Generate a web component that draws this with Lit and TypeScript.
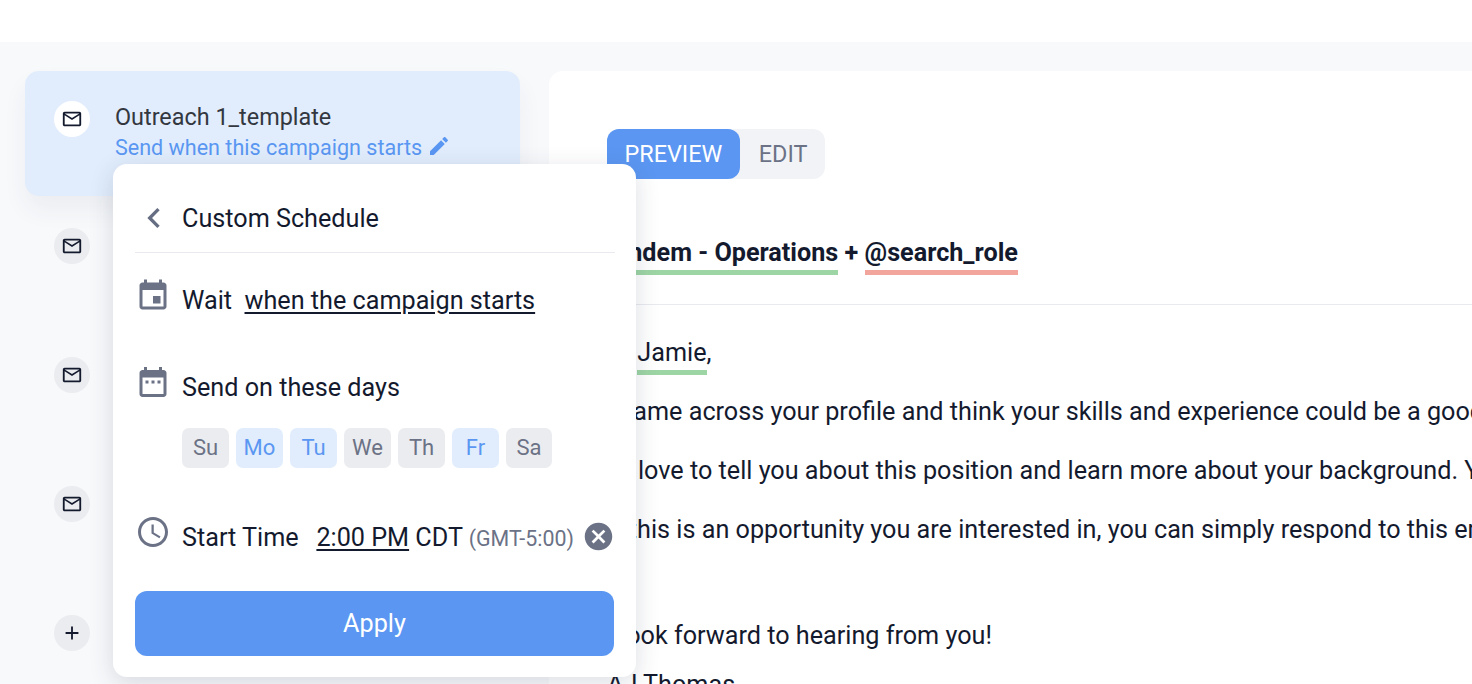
import { LitElement, html, css, svg } from "lit";
import { customElement } from "lit/decorators.js";

const ICONS = {
  mail: "M20 4H4c-1.1 0-1.99.9-1.99 2L2 18c0 1.1.9 2 2 2h16c1.1 0 2-.9 2-2V6c0-1.1-.9-2-2-2zm0 14H4V8l8 5 8-5v10zm-8-7L4 6h16l-8 5z",
  add: "M19 13h-6v6h-2v-6H5v-2h6V5h2v6h6v2z",
  edit: "M3 17.25V21h3.75L17.81 9.94l-3.75-3.75L3 17.25zM20.71 7.04c.39-.39.39-1.02 0-1.41l-2.34-2.34c-.39-.39-1.02-.39-1.41 0l-1.83 1.83 3.75 3.75 1.83-1.83z",
  back: "M15.41 7.41L14 6l-6 6 6 6 1.41-1.41L10.83 12z",
  event: "M17 12h-5v5h5v-5zM16 1v2H8V1H6v2H5c-1.11 0-1.99.9-1.99 2L3 19c0 1.1.89 2 2 2h14c1.1 0 2-.9 2-2V5c0-1.1-.9-2-2-2h-1V1h-2zm3 18H5V8h14v11z",
  range: "M9 11H7v2h2v-2zm4 0h-2v2h2v-2zm4 0h-2v2h2v-2zm2-7h-1V2h-2v2H8V2H6v2H5c-1.11 0-1.99.9-1.99 2L3 20c0 1.1.89 2 2 2h14c1.1 0 2-.9 2-2V6c0-1.1-.9-2-2-2zm0 16H5V9h14v11z",
  clock: "M11.99 2C6.47 2 2 6.48 2 12s4.47 10 9.99 10C17.52 22 22 17.52 22 12S17.52 2 11.99 2zM12 20c-4.42 0-8-3.58-8-8s3.58-8 8-8 8 3.58 8 8-3.58 8-8 8zm.5-13H11v6l5.25 3.15.75-1.23-4.5-2.67z",
  cancel: "M12 2C6.47 2 2 6.47 2 12s4.47 10 10 10 10-4.47 10-10S17.53 2 12 2zm5 13.59L15.59 17 12 13.41 8.41 17 7 15.59 10.59 12 7 8.41 8.41 7 12 10.59 15.59 7 17 8.41 13.41 12 17 15.59z",
};

const icon = (name: keyof typeof ICONS, cls: string) => html`<svg class=${cls} viewBox="0 0 24 24" fill="currentColor">${svg`<path d=${ICONS[name]}></path>`}</svg>`;

const DAYS = [
  { label: "Su", on: false },
  { label: "Mo", on: true },
  { label: "Tu", on: true },
  { label: "We", on: false },
  { label: "Th", on: false },
  { label: "Fr", on: true },
  { label: "Sa", on: false },
];

@customElement("app-root")
export class AppRoot extends LitElement {
  static styles = css`
    :host {
      display: block;
      position: relative;
      height: 684px;
      overflow: hidden;
      background: #fff;
      font-family: Roboto, "Liberation Sans", sans-serif;
      color: #141a2e;
    }
    .page {
      position: absolute;
      inset: 42px 0 0 0;
      display: flex;
      align-items: flex-start;
      gap: 29px;
      padding: 29px 0 0 25px;
      background: #f8f9fb;
    }
    .sidebar {
      width: 495px;
      flex: none;
      display: flex;
      flex-direction: column;
    }
    .step {
      height: 129px;
      box-sizing: border-box;
      padding: 30px 0 0 29px;
      display: flex;
      gap: 25px;
    }
    .step.active {
      height: 125px;
      margin-bottom: 2px;
      background: #e1edfc;
      border-radius: 14px;
      box-shadow: 0 14px 24px rgba(40, 50, 80, 0.06);
    }
    .circle {
      width: 36px;
      height: 36px;
      border-radius: 50%;
      background: #ebecef;
      display: flex;
      align-items: center;
      justify-content: center;
      flex: none;
    }
    .active .circle {
      background: #fff;
    }
    .i22 {
      width: 22px;
      height: 22px;
    }
    .step-text {
      padding-top: 1px;
    }
    .step-title {
      font-size: 23.4px;
      line-height: 31px;
      color: #333740;
    }
    .step-sub {
      display: flex;
      align-items: center;
      gap: 5px;
      font-size: 21.55px;
      line-height: 30px;
      color: #5a97f2;
    }
    .i-edit {
      width: 24px;
      height: 24px;
      margin-top: -5px;
    }
    .main {
      flex: 1;
      height: 700px;
      box-sizing: border-box;
      background: #fff;
      border-radius: 14px 0 0 0;
      padding: 58px 0 0 58px;
      overflow: hidden;
      white-space: nowrap;
    }
    .tabs {
      display: inline-flex;
      background: #f2f3f7;
      border-radius: 12px;
      height: 50px;
      font-size: 23.4px;
      color: #6b7286;
    }
    .tab {
      padding: 0 18px 0 19px;
      line-height: 50px;
      border-radius: 12px;
    }
    .tab.on {
      padding: 0 17.5px;
      background: #5b97f2;
      color: #fff;
    }
    .subject {
      margin: 53px 0 0 -58px;
      padding: 0 0 32px 52px;
      border-bottom: 1px solid #e9eaf0;
      font-size: 25.2px;
      font-weight: 700;
      line-height: 42px;
      height: 40px;
    }
    .mark {
      display: inline-block;
      line-height: 36px;
      height: 35px;
      border-bottom: 5px solid;
    }
    .green {
      border-color: #9ed5a5;
    }
    .red {
      border-color: #f2a59d;
    }
    .body {
      font-size: 25.2px;
      padding-top: 30px;
    }
    .body p {
      margin: 0 0 24px;
      height: 35px;
      line-height: 35px;
    }
    .body p.blank {
      height: 23px;
    }
    .body p.tight {
      margin-bottom: 14px;
    }
    .body .mark {
      line-height: 35px;
      height: 35px;
    }
    .popup {
      position: absolute;
      left: 113px;
      top: 164px;
      width: 523px;
      height: 513px;
      box-sizing: border-box;
      padding: 0 22px;
      background: #fff;
      border-radius: 14px;
      box-shadow: 0 6px 24px rgba(40, 50, 80, 0.16);
      font-size: 25.2px;
      white-space: nowrap;
    }
    .head {
      height: 68px;
      padding-top: 20px;
      display: flex;
      align-items: center;
      gap: 8px;
      border-bottom: 1px solid #e9eaf0;
      margin-right: -1px;
    }
    .i-back {
      width: 40px;
      height: 40px;
      color: #656d82;
      margin-left: -1px;
    }
    .row {
      display: flex;
      align-items: flex-start;
      gap: 11px;
      line-height: 38px;
    }
    .i36 {
      width: 36px;
      height: 36px;
      flex: none;
      color: #6b7286;
    }
    .wait .i36 {
      margin-top: -4px;
    }
    .send .i36,
    .time .i36 {
      margin-top: -5px;
    }
    .link {
      text-decoration: underline;
      text-underline-offset: 3px;
    }
    .time .link {
      margin-left: -1px;
    }
    .wait {
      margin-top: 29px;
    }
    .send {
      margin-top: 49px;
    }
    .days {
      display: flex;
      gap: 7px;
      margin: 21px 0 0 47px;
    }
    .day {
      width: 47px;
      height: 40px;
      border-radius: 7px;
      background: #ebecef;
      color: #6b7286;
      font-size: 22px;
      line-height: 40px;
      text-align: center;
    }
    .day:last-child {
      width: 46px;
    }
    .day.on {
      background: #e1edfc;
      color: #5b97f2;
    }
    .time {
      margin-top: 51px;
    }
    .tz {
      font-size: 21.4px;
      color: #6b7286;
    }
    .i-cancel {
      width: 33px;
      height: 33px;
      flex: none;
      color: #6b7286;
      margin: 1px 0 0 -3px;
    }
    .apply {
      display: block;
      width: 100%;
      height: 65px;
      margin-top: 33px;
      border: 0;
      border-radius: 12px;
      background: #5b97f2;
      color: #fff;
      font: inherit;
      font-size: 25.2px;
    }
  `;

  render() {
    return html`
      <div class="page">
        <div class="sidebar">
          <div class="step active">
            <div class="circle">${icon("mail", "i22")}</div>
            <div class="step-text">
              <div class="step-title">Outreach 1_template</div>
              <div class="step-sub">Send when this campaign starts ${icon("edit", "i-edit")}</div>
            </div>
          </div>
          ${[0, 1, 2].map(() => html`<div class="step"><div class="circle">${icon("mail", "i22")}</div></div>`)}
          <div class="step"><div class="circle">${icon("add", "i22")}</div></div>
        </div>
        <div class="main">
          <div class="tabs">
            <div class="tab on">PREVIEW</div>
            <div class="tab">EDIT</div>
          </div>
          <div class="subject">
            <span class="mark green">Tandem - Operations</span> + <span class="mark red">@search_role</span>
          </div>
          <div class="body">
            <p>Hi <span class="mark green">Jamie</span>,</p>
            <p>I came across your profile and think your skills and experience could be a good fit for a role here.</p>
            <p>I'd love to tell you about this position and learn more about your background. You can reach me here.</p>
            <p>If this is an opportunity you are interested in, you can simply respond to this email and we can talk.</p>
            <p class="blank"></p>
            <p class="tight">I look forward to hearing from you!</p>
            <p>AJ Thomas</p>
          </div>
        </div>
      </div>
      <div class="popup">
        <div class="head">${icon("back", "i-back")}<span>Custom Schedule</span></div>
        <div class="row wait">${icon("event", "i36")}<span>Wait&nbsp; <span class="link">when the campaign starts</span></span></div>
        <div class="row send">${icon("range", "i36")}<span>Send on these days</span></div>
        <div class="days">
          ${DAYS.map((d) => html`<div class="day ${d.on ? "on" : ""}">${d.label}</div>`)}
        </div>
        <div class="row time">
          ${icon("clock", "i36")}
          <span>Start Time &nbsp;&nbsp;<span class="link">2:00 PM</span> CDT <span class="tz">(GMT-5:00)</span></span>
          ${icon("cancel", "i-cancel")}
        </div>
        <button class="apply">Apply</button>
      </div>
    `;
  }
}
